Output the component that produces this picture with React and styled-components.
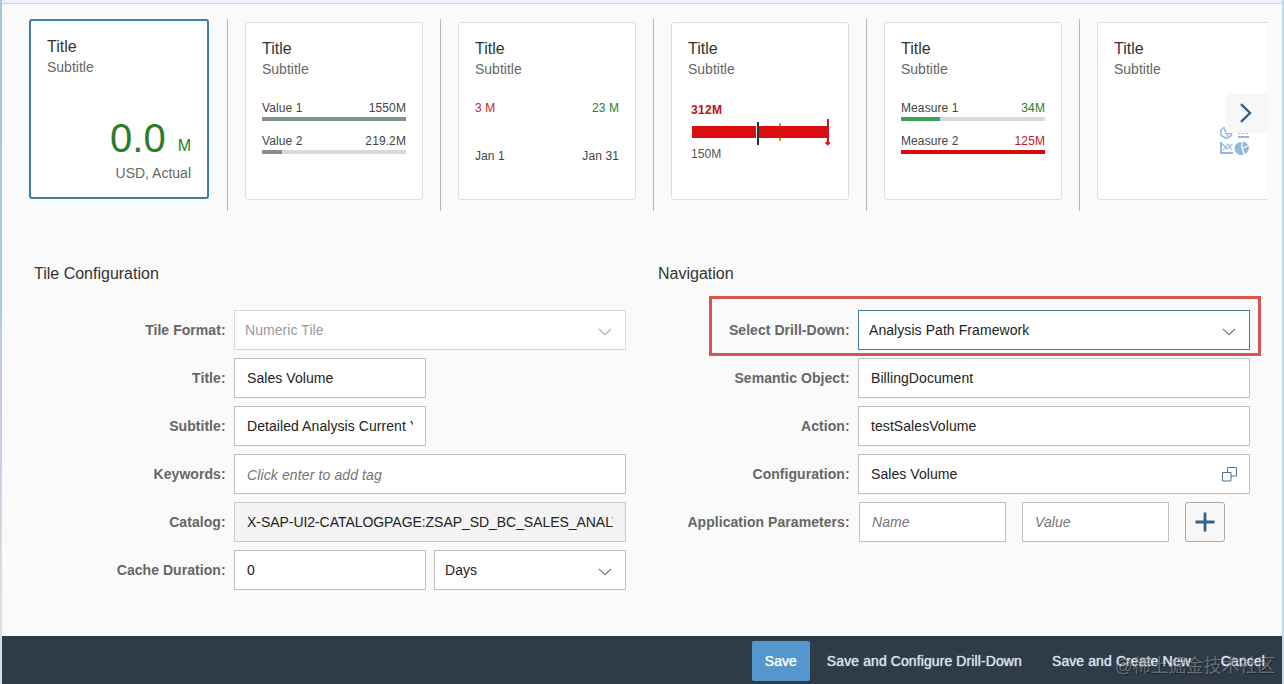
import styled, { createGlobalStyle } from 'styled-components';

const COMPARISONS = {
  values: [
    { label: 'Value 1', value: '1550M', fill: 144, color: '#848f8f' },
    { label: 'Value 2', value: '219.2M', fill: 20, color: '#848f8f' },
  ],
  measures: [
    { label: 'Measure 1', value: '34M', fill: 39, color: '#3fa25a', text: '#2b7d2b' },
    { label: 'Measure 2', value: '125M', fill: 144, color: '#d50a0a', text: '#c4161c' },
  ],
};

function TileHeader() {
  return (
    <>
      <TileTitle>Title</TileTitle>
      <TileSubtitle>Subtitle</TileSubtitle>
    </>
  );
}

function Comparison({ rows }) {
  return rows.map((row) => (
    <CompareRow key={row.label}>
      <SpreadLine>
        <SmallText>{row.label}</SmallText>
        <SmallText $color={row.text}>{row.value}</SmallText>
      </SpreadLine>
      <Track>
        <TrackFill $color={row.color} style={{ width: row.fill }} />
      </Track>
    </CompareRow>
  ));
}

function BulletChart() {
  return (
    <svg width="144" height="28" viewBox="0 0 144 28">
      <rect x="4" y="8" width="137" height="12" fill="#dc0d0e" />
      <rect x="68" y="4" width="1" height="23" fill="#fff" />
      <rect x="69" y="4" width="2" height="23" fill="#2f3338" />
      <rect x="91" y="5" width="2" height="3" fill="#d19a2e" />
      <rect x="91" y="8" width="2" height="12" fill="#cf1010" />
      <rect x="91" y="20" width="2" height="3" fill="#d19a2e" />
      <rect x="139" y="1" width="2" height="22" fill="#c31820" />
      <path d="M139.7 22.3l2.7 2.7-2.7 2.7-2.7-2.7z" fill="#d5141c" />
    </svg>
  );
}

function ChartIcons() {
  return (
    <ChartGlyphs width="30" height="30" viewBox="0 0 30 30" fill="none" stroke="#94b8da">
      <path d="M4.500 1L1 4v5.500L6.500 12.300 11.500 9.500V6" strokeWidth="1.600" />
      <path d="M4.500 2.500l1 4 2.500 3M7.500 4l.5 3.500h3" strokeWidth="1.400" />
      <path d="M18.500 7.500h10" strokeWidth="1" strokeDasharray="2 1.800" />
      <path d="M18 11h11" strokeWidth="2" />
      <path d="M1 16v11H13" strokeWidth="2" />
      <path d="M2 17.500l5 5.500 5.500-5M3 24.500l5-6.500 4 6" strokeWidth="1.200" />
      <path d="M21.300 16v5.500l2.200 7a6.500 6.500 0 1 1-2.200-12.500z" fill="#94b8da" stroke="none" />
      <path d="M22.600 15.800a6.300 6.300 0 0 1 5.400 3.400L22.600 21.400z" fill="#94b8da" stroke="none" />
      <path d="M23 22.400l5.500-2.200a6.300 6.300 0 0 1-3.600 7.800z" fill="#94b8da" stroke="none" />
    </ChartGlyphs>
  );
}

function Chevron({ faded }) {
  return (
    <svg width="14" height="8" viewBox="0 0 14 8" fill="none">
      <path d="M1 1l6 5.700L13 1" stroke={faded ? '#a9b2ba' : '#5f7f9b'} strokeWidth="1.100" />
    </svg>
  );
}

function Field({ label, children, marked }) {
  return (
    <FieldRow>
      <Label>{label}</Label>
      {children}
      {marked && <Marker />}
    </FieldRow>
  );
}

function Input({ children, ...props }) {
  return (
    <Box {...props}>
      <BoxText>{children}</BoxText>
    </Box>
  );
}

function Select({ children, ...props }) {
  return (
    <SelectBox {...props}>
      <BoxText>{children}</BoxText>
      <Chevron faded={props.$disabled} />
    </SelectBox>
  );
}

export default function App() {
  return (
    <Window>
      <GlobalStyle />
      <TopStrip />
      <Content>
        <TileStrip>
          <SelectedTile>
            <TileHeader />
            <Kpi>
              <KpiValue>0.0</KpiValue>
              <KpiScale>M</KpiScale>
            </Kpi>
            <KpiUnit>USD, Actual</KpiUnit>
          </SelectedTile>
          <TileCell>
            <Tile>
              <TileHeader />
              <Comparison rows={COMPARISONS.values} />
            </Tile>
          </TileCell>
          <TileCell>
            <Tile>
              <TileHeader />
              <TrendLine>
                <SmallText $color="#c4262c">3 M</SmallText>
                <SmallText $color="#2b7d2b">23 M</SmallText>
              </TrendLine>
              <SpreadLine>
                <SmallText>Jan 1</SmallText>
                <SmallText>Jan 31</SmallText>
              </SpreadLine>
            </Tile>
          </TileCell>
          <TileCell>
            <Tile>
              <TileHeader />
              <BulletValue>312M</BulletValue>
              <BulletChart />
              <BulletBase>150M</BulletBase>
            </Tile>
          </TileCell>
          <TileCell>
            <Tile>
              <TileHeader />
              <Comparison rows={COMPARISONS.measures} />
            </Tile>
          </TileCell>
          <TileCell>
            <Tile>
              <TileHeader />
              <ChartIcons />
            </Tile>
          </TileCell>
          <NextButton>
            <svg width="14" height="20" viewBox="0 0 14 20" fill="none">
              <path d="M2 1.200l9 8.800-9 8.800" stroke="#346187" strokeWidth="2.400" />
            </svg>
          </NextButton>
        </TileStrip>

        <Forms>
          <Column>
            <Heading>Tile Configuration</Heading>
            <Field label="Tile Format:">
              <Select $width={392} $disabled>
                Numeric Tile
              </Select>
            </Field>
            <Field label="Title:">
              <Input $width={192}>Sales Volume</Input>
            </Field>
            <Field label="Subtitle:">
              <Input $width={192}>Detailed Analysis Current Year</Input>
            </Field>
            <Field label="Keywords:">
              <TagBox $width={392} $placeholder>
                <BoxText>Click enter to add tag</BoxText>
              </TagBox>
            </Field>
            <Field label="Catalog:">
              <Input $width={392} $readOnly>
                X-SAP-UI2-CATALOGPAGE:ZSAP_SD_BC_SALES_ANALYTICS
              </Input>
            </Field>
            <Field label="Cache Duration:">
              <Input $width={192}>0</Input>
              <Select $width={192}>Days</Select>
            </Field>
          </Column>
          <Column>
            <Heading>Navigation</Heading>
            <Field label="Select Drill-Down:" marked>
              <Select $width={392} $focused>
                Analysis Path Framework
              </Select>
            </Field>
            <Field label="Semantic Object:">
              <Input $width={392}>BillingDocument</Input>
            </Field>
            <Field label="Action:">
              <Input $width={392}>testSalesVolume</Input>
            </Field>
            <Field label="Configuration:">
              <Box $width={392}>
                <BoxText>Sales Volume</BoxText>
                <svg width="15" height="15" viewBox="0 0 15 15" fill="none" stroke="#4a7293">
                  <path d="M.5 5.500h8.500v8.500H.5zM5.500 5.500v-5h9v8.500H9" />
                </svg>
              </Box>
            </Field>
            <Field label="Application Parameters:">
              <Params>
                <Input $width={147} $placeholder>
                  Name
                </Input>
                <Input $width={147} $placeholder>
                  Value
                </Input>
                <AddButton>
                  <svg width="20" height="20" viewBox="0 0 20 20">
                    <path d="M10 .5v19M.5 10h19" stroke="#346187" strokeWidth="2.800" />
                  </svg>
                </AddButton>
              </Params>
            </Field>
          </Column>
        </Forms>
      </Content>
      <Footer>
        <SaveButton>Save</SaveButton>
        <FooterButton $left={17}>Save and Configure Drill-Down</FooterButton>
        <FooterButton $left={30}>Save and Create New</FooterButton>
        <FooterButton $left={30}>Cancel</FooterButton>
        <Watermark>@稀土掘金技术社区</Watermark>
      </Footer>
    </Window>
  );
}

const GlobalStyle = createGlobalStyle`
  * {
    box-sizing: border-box;
  }
  body {
    margin: 0;
    overflow: hidden;
    font-family: 'Liberation Sans', Arial, sans-serif;
    font-size: 14px;
    color: #333;
  }
  button {
    font: inherit;
    padding: 0;
    border: 0;
    background: none;
  }
  svg {
    display: block;
    flex: none;
  }
`;

const Window = styled.div`
  display: flex;
  flex-direction: column;
  width: 1284px;
  height: 684px;
  padding: 0 2px;
  background: linear-gradient(to right, transparent 50%, #c6d5e0 50%),
    linear-gradient(#a9c2e0, #b3c8e0 45%, #cfcde6 68%, #d9dce2 85%, #d3e2ee);
`;

const TopStrip = styled.div`
  flex: none;
  height: 4px;
  background: #eef0fb;
  border-bottom: 1px solid #c9d3ea;
`;

const Content = styled.main`
  flex: 1;
  padding: 15px 15px 0 27px;
  background: #fafafa;
`;

const TileStrip = styled.section`
  position: relative;
  display: flex;
  height: 192px;
  overflow: hidden;
`;

const TileCell = styled.div`
  flex: none;
  padding: 3px 17px 0;
  border-left: 1px solid #b5b8bb;
`;

const Tile = styled.article`
  display: flex;
  flex-direction: column;
  width: 178px;
  height: 178px;
  padding: 15px 16px 0;
  background: #fff;
  border: 1px solid #dcdddd;
  border-radius: 3px;
`;

const SelectedTile = styled(Tile)`
  flex: none;
  width: 180px;
  height: 180px;
  margin-right: 18px;
  border: 2px solid #427cac;
`;

const TileTitle = styled.div`
  font-size: 16px;
  line-height: 21px;
  color: #333;
`;

const TileSubtitle = styled.div`
  line-height: 20px;
  margin-bottom: 22px;
  color: #666;
`;

const SpreadLine = styled.div`
  display: flex;
  justify-content: space-between;
`;

const TrendLine = styled(SpreadLine)`
  margin-bottom: 33px;
`;

const SmallText = styled.span`
  font-size: 12px;
  line-height: 15px;
  letter-spacing: 0.1px;
  color: ${({ $color }) => $color || '#444'};
`;

const CompareRow = styled.div`
  margin-bottom: 13px;
`;

const Track = styled.div`
  height: 4px;
  margin-top: 1px;
  background: #d5dada;
`;

const TrackFill = styled.div`
  height: 4px;
  background: ${({ $color }) => $color};
`;

const BulletValue = styled.div`
  margin: 2px 0 0 3px;
  font-size: 12px;
  line-height: 15px;
  letter-spacing: 0.3px;
  font-weight: bold;
  color: #bb1118;
`;

const BulletBase = styled(BulletValue)`
  margin: 1px 0 0 3px;
  letter-spacing: 0.1px;
  font-weight: normal;
  color: #555;
`;

const ChartGlyphs = styled.svg`
  align-self: flex-end;
  margin: 25px 8px 0 0;
`;

const Kpi = styled.div`
  display: flex;
  justify-content: flex-end;
  align-items: baseline;
  gap: 12px;
  height: 49px;
  margin-top: 15px;
  line-height: 48px;
  color: #2b7d2b;
`;

const KpiValue = styled.span`
  font-size: 40px;
`;

const KpiScale = styled.span`
  position: relative;
  top: -1px;
  font-size: 16px;
`;

const KpiUnit = styled.div`
  line-height: 20px;
  text-align: right;
  color: #666;
`;

const NextButton = styled.button`
  position: absolute;
  top: 74px;
  right: 0;
  display: flex;
  align-items: center;
  width: 41px;
  height: 40px;
  padding: 0 0 1px 13px;
  background: #f7f7f7;
`;

const Forms = styled.section`
  display: grid;
  grid-template-columns: 592px 592px;
  gap: 32px;
  margin: 53px 0 0 5px;
`;

const Column = styled.div`
  display: flex;
  flex-direction: column;
  gap: 8px;
`;

const Heading = styled.h2`
  margin: 0 0 18px;
  font-size: 16px;
  line-height: 20px;
  font-weight: normal;
`;

const FieldRow = styled.div`
  position: relative;
  display: flex;
  align-items: center;
  gap: 8px;
`;

const Label = styled.label`
  width: 192px;
  padding-right: 0.4px;
  font-weight: bold;
  letter-spacing: 0.05px;
  text-align: right;
  white-space: nowrap;
  color: #666;
`;

// red frame drawn over the drill-down field
const Marker = styled.div`
  position: absolute;
  top: -14px;
  left: 51px;
  width: 552px;
  height: 60px;
  border: 3px solid #d9534f;
`;

const borderColor = ({ $disabled, $focused, $readOnly }) => {
  if ($disabled) return '#dadada';
  if ($focused) return '#427cac';
  return $readOnly ? '#cacaca' : '#bfbfbf';
};

const Box = styled.div`
  display: flex;
  align-items: center;
  width: ${({ $width }) => $width}px;
  height: 40px;
  padding: 0 12px;
  background: ${({ $readOnly }) => ($readOnly ? '#f4f4f4' : '#fff')};
  border: 1px solid ${borderColor};
  color: ${({ $disabled, $placeholder }) => ($disabled ? '#999' : $placeholder ? '#757575' : '#222')};
  font-style: ${({ $placeholder }) => ($placeholder ? 'italic' : 'normal')};
  letter-spacing: ${({ $readOnly }) => ($readOnly ? '-0.05px' : '0.07px')};
`;

const SelectBox = styled(Box)`
  padding: 0 13px 0 10px;

  svg {
    margin-top: 4px;
  }
`;

const TagBox = styled(Box)`
  padding-top: 2px;
  letter-spacing: 0.12px;
`;

const BoxText = styled.span`
  flex: 1;
  min-width: 0;
  overflow: hidden;
  line-height: 20px;
  white-space: nowrap;
`;

const Params = styled.div`
  display: flex;
  gap: 16px;
  margin-left: 1px;
`;

const AddButton = styled.button`
  display: flex;
  align-items: center;
  justify-content: center;
  width: 40px;
  height: 40px;
  background: #f7f7f7;
  border: 1px solid #ababab;
  border-radius: 3px;
`;

const Footer = styled.footer`
  position: relative;
  display: flex;
  flex: none;
  align-items: center;
  justify-content: flex-end;
  height: 48px;
  padding: 2px 17px 0 0;
  background: #2f3c48;
`;

const FooterButton = styled.button`
  margin-left: ${({ $left }) => $left}px;
  letter-spacing: 0.1px;
  white-space: nowrap;
  color: #d5e4f0;
  text-shadow: 0 0 1px #d5e4f0;
`;

const SaveButton = styled.button`
  width: 58px;
  height: 40px;
  border-radius: 2px;
  background: #5496cd;
  color: #fff;
  text-shadow: 0 0 1px #fff;
`;

const Watermark = styled.span`
  position: absolute;
  right: 7px;
  top: 18px;
  font-family: 'Liberation Sans', 'Noto Sans CJK SC', sans-serif;
  font-size: 17.8px;
  line-height: 24px;
  white-space: nowrap;
  color: rgba(255, 255, 255, 0.3);
  text-shadow: 1px 1px 1px rgba(0, 0, 0, 0.4);
`;
